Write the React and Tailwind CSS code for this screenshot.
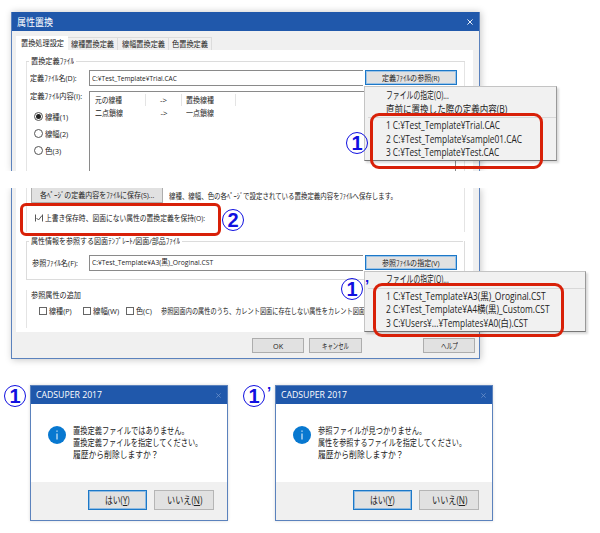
import React, { useLayoutEffect, useRef, useState } from 'react';

// Single line of text condensed or stretched to a given width
const Fit = ({ w, children, className = '' }) => {
  const ref = useRef(null);
  const [scale, setScale] = useState(1);

  useLayoutEffect(() => {
    setScale(w / ref.current.offsetWidth);
  }, [w]);

  return (
    <span className={`block shrink-0 whitespace-nowrap ${className}`} style={{ width: w }}>
      <span ref={ref} className="inline-block origin-left" style={{ transform: `scaleX(${scale})` }}>
        {children}
      </span>
    </span>
  );
};

const CloseIcon = ({ className }) => (
  <svg className={className} viewBox="0 0 6 6" fill="none" stroke="currentColor" strokeWidth="0.9">
    <path d="M0.4 0.4L5.6 5.6M5.6 0.4L0.4 5.6" />
  </svg>
);

const Radio = ({ label, w, checked }) => (
  <div className="flex h-[17px] items-center gap-[2px]">
    <span className="flex size-[9px] items-center justify-center rounded-full border border-[#555] bg-white">
      {checked && <span className="size-[5px] rounded-full bg-[#222]" />}
    </span>
    <Fit w={w}>{label}</Fit>
  </div>
);

const Check = ({ label, w, className = '' }) => (
  <div className={`flex items-center gap-[2px] ${className}`}>
    <span className="size-[8px] shrink-0 border border-[#666] bg-white" />
    <Fit w={w}>{label}</Fit>
  </div>
);

const Button = ({ label, w, className = '' }) => (
  <div className={`flex h-[15px] shrink-0 items-center justify-center border bg-[#e1e1e1] ${className}`}>
    <Fit w={w}>{label}</Fit>
  </div>
);

const Mark = ({ children, className, prime }) => (
  <div className={`absolute flex text-[#1010e0] ${className}`}>
    <span className="flex size-[22px] items-center justify-center rounded-full border-[1.5px] border-[#1010e0] font-['Liberation_Sans',sans-serif] text-[20px] leading-none font-bold">
      {children}
    </span>
    {prime && <span className="-mt-[2px] ml-[2px] font-['Liberation_Sans',sans-serif] text-[15px] leading-[18px] font-bold">’</span>}
  </div>
);

const MessageBox = ({ lines, buttonWidths, className }) => (
  <div className={`flex h-[136px] flex-col border border-[#5b82bd] bg-white shadow-[0_0_3px_rgba(0,0,0,0.15)] ${className}`}>
    <div className="flex h-[18px] shrink-0 items-center justify-between bg-[#2058ab] pr-[6px] pl-[5px] text-[9.5px] text-white">
      <Fit w={66}>CADSUPER 2017</Fit>
      <CloseIcon className="size-[5px] text-[#6f93cb]" />
    </div>
    <div className="flex flex-1 gap-[7px] pt-[21px] pl-[17px]">
      <span className="mt-[1px] flex size-[18px] shrink-0 items-center justify-center rounded-full bg-[#0878d0]">
        <svg className="size-[18px]" viewBox="0 0 18 18" fill="none" stroke="white" strokeWidth="1">
          <path d="M9 7.5V13.5M9 4.5V5.8" />
        </svg>
      </span>
      <div className="text-[9.5px] leading-[12px]">
        {lines.map(line => (
          <Fit key={line.text} w={line.w}>{line.text}</Fit>
        ))}
      </div>
    </div>
    <div className="flex h-[38px] shrink-0 justify-end gap-[7px] bg-[#f0f0f0] pt-[8px] pr-[13px] text-[10px]">
      <div className="flex h-[20px] w-[59px] items-center justify-center border border-[#1c78c8] bg-[#e1e1e1] shadow-[inset_0_0_0_1px_#8fbbe2]">
        <Fit w={buttonWidths[0]}>はい(<u>Y</u>)</Fit>
      </div>
      <div className="flex h-[20px] w-[60px] items-center justify-center border border-[#b5b5b5] bg-[#e1e1e1]">
        <Fit w={buttonWidths[1]}>いいえ(<u>N</u>)</Fit>
      </div>
    </div>
  </div>
);

const Menu = ({ heads, files, className }) => (
  <div className={`absolute border border-[#c4c4c4] border-r-[#999] border-b-[#777] bg-[#f1f1f1] pl-[21px] text-[10px] shadow-[2px_2px_2px_rgba(0,0,0,0.15)] ${className}`}>
    <div className="-ml-[18px] border-b border-[#d8d8d8] pb-[1px] pl-[18px]">
      {heads.map(item => (
        <Fit key={item.text} w={item.w} className="h-[13.5px] leading-[13.5px]">{item.text}</Fit>
      ))}
    </div>
    <div className="pt-[1px]">
      {files.map(item => (
        <Fit key={item.text} w={item.w} className="h-[13.5px] leading-[13.5px]">{item.text}</Fit>
      ))}
    </div>
  </div>
);

const tabs = [
  { text: '線種置換定義', w: 43, box: 'w-[50px]' },
  { text: '線幅置換定義', w: 43, box: 'w-[51px]' },
  { text: '色置換定義', w: 36, box: 'w-[43px]' },
];

const definitionFiles = [
  { text: '1 C:¥Test_Template¥Trial.CAC', w: 114 },
  { text: '2 C:¥Test_Template¥sample01.CAC', w: 136 },
  { text: '3 C:¥Test_Template¥Test.CAC', w: 113 },
];

const referenceFiles = [
  { text: '1 C:¥Test_Template¥A3(黒)_Oroginal.CST', w: 160 },
  { text: '2 C:¥Test_Template¥A4横(黒)_Custom.CST', w: 164 },
  { text: '3 C:¥Users¥...¥Templates¥A0(白).CST', w: 142 },
];

const TopPart = () => (
  <div className="ml-[11px] h-[159px] w-[469px] overflow-hidden border-x border-[#5b82bd] bg-[#f0f0f0] shadow-[1px_0_7px_rgba(0,0,0,0.22)] [clip-path:inset(-8px_-10px_0_-8px)]">
    <div className="flex h-[19px] items-center justify-between bg-[#2058ab] pr-[6px] pl-[5px] text-[10.5px] text-white">
      <Fit w={36}>属性置換</Fit>
      <CloseIcon className="size-[6px]" />
    </div>
    <div className="flex h-[19px] items-end pl-[4px]">
      <div className="flex h-[14px] w-[52px] items-center justify-center bg-white">
        <Fit w={43}>置換処理設定</Fit>
      </div>
      {tabs.map(tab => (
        <div key={tab.text} className={`flex h-[13px] items-center justify-center border-t border-r border-[#dcdcdc] ${tab.box}`}>
          <Fit w={tab.w}>{tab.text}</Fit>
        </div>
      ))}
    </div>
    <div className="mr-[6px] ml-[4px] h-[121px] bg-white pt-[5px] pl-[10px]">
      <div className="flex h-[12px] items-center">
        <span className="w-[3px] border-t border-[#dcdcdc]" />
        <Fit w={43} className="mx-[2px]">置換定義ﾌｧｲﾙ</Fit>
        <span className="w-[389px] border-t border-[#dcdcdc]" />
      </div>
      <div className="-mt-[6px] flex h-[115px] w-[439px] border-x border-[#e4e4e4] pl-[3px]">
        <div className="w-[59px] shrink-0 pt-[9px]">
          <Fit w={47} className="h-[16px] leading-[16px]">定義ﾌｧｲﾙ名(D):</Fit>
          <Fit w={52} className="mt-[2px] h-[16px] leading-[16px]">定義ﾌｧｲﾙ内容(I):</Fit>
          <div className="mt-[4px] pl-[4px]">
            <Radio label="線種(1)" w={23} checked />
            <Radio label="線幅(2)" w={23} />
            <Radio label="色(3)" w={16} />
          </div>
        </div>
        <div className="pt-[9px]">
          <div className="flex gap-[2px]">
            <div className="flex h-[16px] w-[274px] items-center border border-r-0 border-[#8a8a8a] pl-[2px]">
              <Fit w={85}>C:¥Test_Template¥Trial.CAC</Fit>
            </div>
            <Button label="定義ﾌｧｲﾙの参照(R)" w={58} className="w-[92px] border-[#1c78c8] shadow-[inset_0_0_0_1px_#9cc3e6]" />
          </div>
          <div className="mt-[5px] h-[90px] w-[367px] border border-[#8a8a8a] pt-[1px] pl-[5px]">
            <div className="flex h-[13px] items-center">
              <div className="w-[51px] border-r border-[#e4e4e4]"><Fit w={27}>元の線種</Fit></div>
              <div className="flex w-[36px] justify-center border-r border-[#e4e4e4]"><Fit w={7}>-&gt;</Fit></div>
              <div className="w-[54px] border-r border-[#e4e4e4] pl-[4px]"><Fit w={28}>置換線種</Fit></div>
            </div>
            <div className="flex h-[13px] items-center">
              <div className="w-[51px]"><Fit w={28}>二点鎖線</Fit></div>
              <div className="flex w-[36px] justify-center"><Fit w={7}>-&gt;</Fit></div>
              <div className="w-[54px] pl-[4px]"><Fit w={28}>一点鎖線</Fit></div>
            </div>
          </div>
        </div>
      </div>
    </div>
  </div>
);

const BottomPart = () => (
  <div className="mt-[17px] ml-[11px] h-[171px] w-[469px] border-x border-b border-[#5b82bd] bg-[#f0f0f0] shadow-[1px_1px_7px_rgba(0,0,0,0.22)] [clip-path:inset(0_-10px_-10px_-8px)]">
    <div className="mr-[6px] ml-[4px] h-[144px] bg-white px-[10px]">
      <div className="h-[44px] w-[439px] border-x border-[#e4e4e4]">
        <div className="flex gap-[6px] pl-[4px]">
          <Button label="各ﾍﾟｰｼﾞの定義内容をﾌｧｲﾙに保存(S)..." w={114} className="w-[132px] border-t-0 border-[#adadad]" />
          <Fit w={228} className="h-[15px] leading-[15px]">線種、線幅、色の各ﾍﾟｰｼﾞで設定されている置換定義内容をﾌｧｲﾙへ保存します。</Fit>
        </div>
        <div className="mt-[8px] flex items-center gap-[2px] pl-[8px]">
          <svg className="h-[8px] w-[8px]" viewBox="0 0 8 8" fill="none" stroke="#444" strokeWidth="0.9">
            <path d="M0.5 0.5V7.5M1.5 4L3.5 6L7 1.5M7.5 0.5V7.5" />
          </svg>
          <Fit w={160} className="h-[14px] leading-[14px]">上書き保存時、図面にない属性の置換定義を保持(O):</Fit>
        </div>
      </div>
      <div className="mt-[3px] flex h-[12px] items-center">
        <span className="w-[3px] border-t border-[#dcdcdc]" />
        <Fit w={149} className="mx-[2px]">属性情報を参照する図面ﾃﾝﾌﾟﾚｰﾄ/図面/部品ﾌｧｲﾙ</Fit>
        <span className="w-[283px] border-t border-[#dcdcdc]" />
      </div>
      <div className="-mt-[6px] flex h-[39px] w-[439px] items-center border-x border-b border-[#dcdcdc] pt-[5px] pl-[5px]">
        <Fit w={46} className="mr-[11px]">参照ﾌｧｲﾙ名(F):</Fit>
        <div className="flex h-[16px] w-[274px] items-center border border-r-0 border-[#8a8a8a] pb-[1px] pl-[2px]">
          <Fit w={121}>C:¥Test_Template¥A3(黒)_Oroginal.CST</Fit>
        </div>
        <Button label="参照ﾌｧｲﾙの指定(V)" w={58} className="ml-[2px] w-[92px] border-[#1c78c8] shadow-[inset_0_0_0_1px_#9cc3e6]" />
      </div>
      <div className="mt-[10px] h-[38px] border-l border-[#e4e4e4] pl-[4px]">
        <Fit w={50} className="h-[12px] leading-[9px]">参照属性の追加</Fit>
        <div className="mt-[3px] flex items-center pl-[8px]">
          <Check label="線種(P)" w={23} className="w-[44px]" />
          <Check label="線幅(W)" w={26} className="w-[43px]" />
          <Check label="色(C)" w={16} className="w-[35px]" />
          <Fit w={204}>参照図面内の属性のうち、カレント図面に存在しない属性をカレント図面</Fit>
        </div>
      </div>
    </div>
    <div className="flex pt-[6px] pl-[240px]">
      <Button label="OK" w={10} className="w-[52px] border-[#adadad]" />
      <Button label="キャンセル" w={27} className="ml-[5px] w-[53px] border-[#adadad]" />
      <Button label="ヘルプ" w={17} className="ml-[61px] w-[52px] border-[#adadad]" />
    </div>
  </div>
);

const App = () => {
  return (
    <div className="relative h-[533px] w-[600px] overflow-hidden bg-white pt-[12px] font-['Open_Sans','Noto_Sans_CJK_JP',sans-serif] text-[8px] leading-[12px] text-[#222]">
      <TopPart />
      <BottomPart />

      <div className="mt-[26px] flex pl-[30px]">
        <MessageBox
          className="w-[198px]"
          buttonWidths={[25, 35]}
          lines={[
            { text: '置換定義ファイルではありません。', w: 116 },
            { text: '置換定義ファイルを指定してください。', w: 129 },
            { text: '履歴から削除しますか？', w: 86 },
          ]}
        />
        <MessageBox
          className="ml-[47px] w-[218px]"
          buttonWidths={[25, 35]}
          lines={[
            { text: '参照ファイルが見つかりません。', w: 108 },
            { text: '属性を参照するファイルを指定してください。', w: 148 },
            { text: '履歴から削除しますか？', w: 86 },
          ]}
        />
      </div>

      {/* History menus */}
      <Menu
        className="top-[86px] left-[364px] h-[75px] w-[193px] pt-[2px]"
        heads={[
          { text: 'ファイルの指定(O)...', w: 63 },
          { text: '直前に置換した際の定義内容(B)', w: 121 },
        ]}
        files={definitionFiles}
      />
      <Menu
        className="top-[271px] left-[364px] h-[61px] w-[222px] pt-[1px]"
        heads={[{ text: 'ファイルの指定(O)...', w: 63 }]}
        files={referenceFiles}
      />

      {/* Callouts */}
      <div className="absolute top-[113px] left-[370px] h-[56px] w-[173px] rounded-[9px] border-[3px] border-[#d82008]" />
      <div className="absolute top-[203px] left-[20px] h-[33px] w-[201px] rounded-[6px] border-[3px] border-[#d82008]" />
      <div className="absolute top-[283px] left-[373px] h-[54px] w-[191px] rounded-[9px] border-[3px] border-[#d82008]" />
      <Mark className="top-[132px] left-[346px]">1</Mark>
      <Mark className="top-[209px] left-[222px]">2</Mark>
      <Mark className="top-[278px] left-[341px]" prime>1</Mark>
      <Mark className="top-[385px] left-[4px]">1</Mark>
      <Mark className="top-[385px] left-[243px]" prime>1</Mark>
    </div>
  );
};

export default App;
